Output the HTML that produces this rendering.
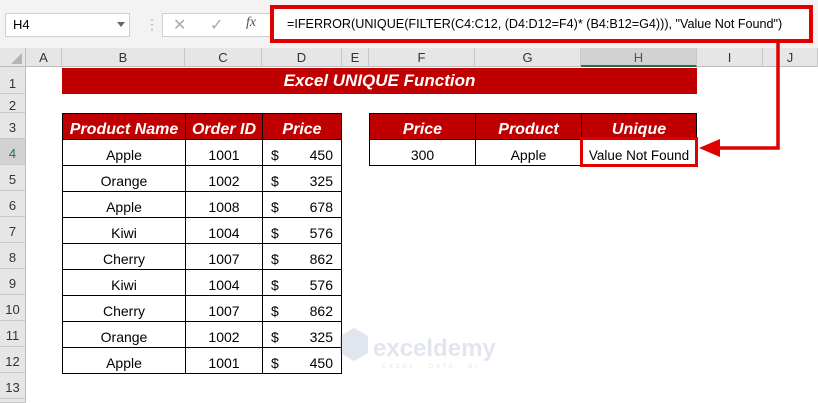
<!DOCTYPE html><html><head><style>
*{margin:0;padding:0;box-sizing:border-box}
body{width:818px;height:403px;overflow:hidden;background:#fff;font-family:"Liberation Sans",sans-serif;position:relative}
.a{position:absolute}
.ch{position:absolute;top:48px;height:19px;background:#e6e6e6;border-right:1px solid #c8c8c8;border-bottom:1px solid #bdbdbd;font-size:13px;color:#333;text-align:center;line-height:19px}
.rh{position:absolute;left:0;width:26px;background:#e6e6e6;border-bottom:1px solid #c8c8c8;border-right:1px solid #bdbdbd;font-size:13px;color:#333;text-align:center;padding-top:3px}
.c{position:absolute;border:1px solid #000;font-size:14px;text-align:center;line-height:25px;padding-top:3px;color:#000}
.h{background:#c00000;color:#fff;font-weight:bold;font-style:italic;font-size:16px}
</style></head><body>
<div class="a" style="left:0;top:0;width:818px;height:48px;background:#f3f3f3"></div>
<div class="a" style="left:5px;top:13px;width:125px;height:24px;background:#fff;border:1px solid #d0d0d0;font-size:13px;line-height:22px;padding-left:7px">H4</div>
<div class="a" style="left:117px;top:22px;width:0;height:0;border-left:4px solid transparent;border-right:4px solid transparent;border-top:5px solid #666"></div>
<div class="a" style="left:145px;top:16px;color:#aaa;font-size:14px">⋮</div>
<div class="a" style="left:162px;top:13px;width:110px;height:24px;background:#fff;border:1px solid #d0d0d0"></div>
<div class="a" style="left:173px;top:15px;color:#aaa;font-size:16px">✕</div>
<div class="a" style="left:210px;top:15px;color:#aaa;font-size:16px">✓</div>
<div class="a" style="left:246px;top:15px;color:#555;font-size:14px;font-style:italic;font-family:'Liberation Serif',serif">fx</div>
<div class="a" style="left:270px;top:5px;width:543px;height:38px;background:#fff;border:4px solid #e00000;font-size:12.6px;line-height:30px;padding-left:13px;white-space:nowrap;overflow:hidden">=IFERROR(UNIQUE(FILTER(C4:C12, (D4:D12=F4)* (B4:B12=G4))), "Value Not Found")</div>
<div class="a" style="left:0;top:48px;width:26px;height:19px;background:#e6e6e6;border-right:1px solid #bdbdbd;border-bottom:1px solid #bdbdbd"></div>
<div class="a" style="left:11px;top:53px;width:0;height:0;border-left:11px solid transparent;border-bottom:11px solid #b5b5b5"></div>
<div class="ch" style="left:26px;width:36px">A</div>
<div class="ch" style="left:62px;width:123px">B</div>
<div class="ch" style="left:185px;width:77px">C</div>
<div class="ch" style="left:262px;width:80px">D</div>
<div class="ch" style="left:342px;width:27px">E</div>
<div class="ch" style="left:369px;width:106px">F</div>
<div class="ch" style="left:475px;width:106px">G</div>
<div class="ch" style="left:581px;width:116px;background:#d2d2d2;border-bottom:2px solid #217346;color:#217346">H</div>
<div class="ch" style="left:697px;width:66px">I</div>
<div class="ch" style="left:763px;width:55px">J</div>
<div class="rh" style="top:67px;height:27px;line-height:27px">1</div>
<div class="rh" style="top:94px;height:19px;line-height:17px">2</div>
<div class="rh" style="top:113px;height:26px;line-height:23px">3</div>
<div class="rh" style="top:139px;height:26px;line-height:23px;background:#d2d2d2;color:#217346">4</div>
<div class="rh" style="top:165px;height:26px;line-height:23px">5</div>
<div class="rh" style="top:191px;height:26px;line-height:23px">6</div>
<div class="rh" style="top:217px;height:26px;line-height:23px">7</div>
<div class="rh" style="top:243px;height:26px;line-height:23px">8</div>
<div class="rh" style="top:269px;height:26px;line-height:23px">9</div>
<div class="rh" style="top:295px;height:26px;line-height:23px">10</div>
<div class="rh" style="top:321px;height:26px;line-height:23px">11</div>
<div class="rh" style="top:347px;height:26px;line-height:23px">12</div>
<div class="rh" style="top:373px;height:26px;line-height:23px">13</div>
<div class="rh" style="top:399px;height:4px;padding:0"></div>
<div class="a h" style="left:62px;top:68px;width:635px;height:26px;line-height:26px;text-align:center;font-size:17px">Excel UNIQUE Function</div>

<div class="c h" style="left:62px;top:113px;width:124px;height:27px">Product Name</div>
<div class="c h" style="left:185px;top:113px;width:78px;height:27px">Order ID</div>
<div class="c h" style="left:262px;top:113px;width:80px;height:27px">Price</div>
<div id="t"></div>
<div class="c h" style="left:369px;top:113px;width:107px;height:27px">Price</div>
<div class="c h" style="left:475px;top:113px;width:107px;height:27px">Product</div>
<div class="c h" style="left:581px;top:113px;width:116px;height:27px">Unique</div>
<div class="c" style="left:369px;top:139px;width:107px;height:27px">300</div>
<div class="c" style="left:475px;top:139px;width:107px;height:27px">Apple</div>
<div class="c" style="left:581px;top:139px;width:116px;height:27px;font-size:13.5px">Value Not Found</div>
<div class="a" style="left:580px;top:137px;width:118px;height:30px;border:3px solid #e00000"></div>

<svg class="a" style="left:0;top:0" width="818" height="403">
<polyline points="778,42 778,148 716,148" fill="none" stroke="#e00000" stroke-width="3.5"/>
<polygon points="699,148 720,139 720,157" fill="#e00000"/>
<g opacity="0.22"><polygon points="340,336 354,328 368,336 368,353 354,361 340,353" fill="#7a8fb5"/>
<text x="373" y="356" font-size="24" font-weight="bold" fill="#7a8fb5" font-family="Liberation Sans">exceldemy</text>
<text x="382" y="368" font-size="6.5" fill="#7a8fb5" font-family="Liberation Sans" letter-spacing="2.5">EXCEL · DATA · BI</text></g>
</svg>
<script>
var d=[["Apple",1001,450],["Orange",1002,325],["Apple",1008,678],["Kiwi",1004,576],["Cherry",1007,862],["Kiwi",1004,576],["Cherry",1007,862],["Orange",1002,325],["Apple",1001,450]],h="";
d.forEach(function(r,i){var y=139+i*26;
h+='<div class="c" style="left:62px;top:'+y+'px;width:124px;height:27px">'+r[0]+'</div>';
h+='<div class="c" style="left:185px;top:'+y+'px;width:78px;height:27px">'+r[1]+'</div>';
h+='<div class="c" style="left:262px;top:'+y+'px;width:80px;height:27px;text-align:right;padding-right:8px">'+r[2]+'<span style="position:absolute;left:8px">$</span></div>';});
document.getElementById("t").outerHTML=h;
</script>
</body></html>
